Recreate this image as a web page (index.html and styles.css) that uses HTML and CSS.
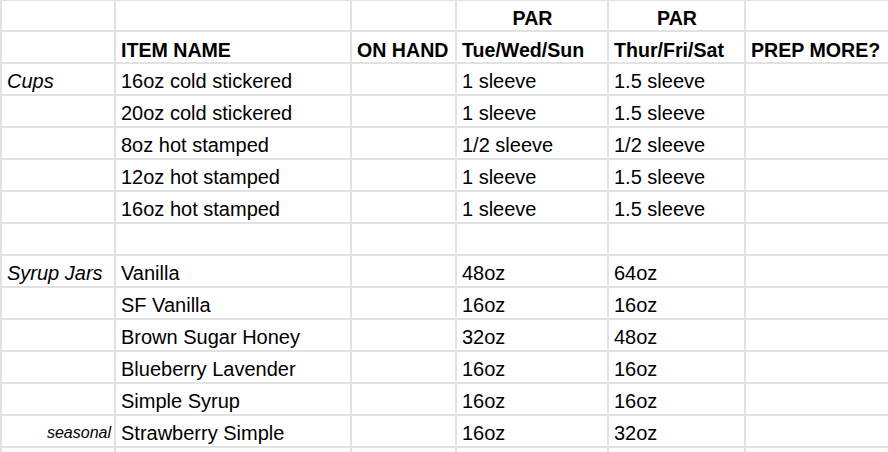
FILE: index.html
```html
<!DOCTYPE html>
<html>
<head>
<meta charset="utf-8">
<link rel="stylesheet" href="styles.css">
</head>
<body>
<div class="sheet">
  <div class="c"></div><div class="c"></div><div class="c"></div><div class="c b ctr">PAR</div><div class="c b ctr">PAR</div><div class="c"></div>
  <div class="c"></div><div class="c b">ITEM NAME</div><div class="c b">ON HAND</div><div class="c b">Tue/Wed/Sun</div><div class="c b">Thur/Fri/Sat</div><div class="c b">PREP MORE?</div>

  <div class="c i">Cups</div><div class="c">16oz cold stickered</div><div class="c"></div><div class="c">1 sleeve</div><div class="c">1.5 sleeve</div><div class="c"></div>
  <div class="c"></div><div class="c">20oz cold stickered</div><div class="c"></div><div class="c">1 sleeve</div><div class="c">1.5 sleeve</div><div class="c"></div>
  <div class="c"></div><div class="c">8oz hot stamped</div><div class="c"></div><div class="c">1/2 sleeve</div><div class="c">1/2 sleeve</div><div class="c"></div>
  <div class="c"></div><div class="c">12oz hot stamped</div><div class="c"></div><div class="c">1 sleeve</div><div class="c">1.5 sleeve</div><div class="c"></div>
  <div class="c"></div><div class="c">16oz hot stamped</div><div class="c"></div><div class="c">1 sleeve</div><div class="c">1.5 sleeve</div><div class="c"></div>

  <div class="c"></div><div class="c"></div><div class="c"></div><div class="c"></div><div class="c"></div><div class="c"></div>

  <div class="c i">Syrup Jars</div><div class="c">Vanilla</div><div class="c"></div><div class="c">48oz</div><div class="c">64oz</div><div class="c"></div>
  <div class="c"></div><div class="c">SF Vanilla</div><div class="c"></div><div class="c">16oz</div><div class="c">16oz</div><div class="c"></div>
  <div class="c"></div><div class="c">Brown Sugar Honey</div><div class="c"></div><div class="c">32oz</div><div class="c">48oz</div><div class="c"></div>
  <div class="c"></div><div class="c">Blueberry Lavender</div><div class="c"></div><div class="c">16oz</div><div class="c">16oz</div><div class="c"></div>
  <div class="c"></div><div class="c">Simple Syrup</div><div class="c"></div><div class="c">16oz</div><div class="c">16oz</div><div class="c"></div>
  <div class="c i small">seasonal</div><div class="c">Strawberry Simple</div><div class="c"></div><div class="c">16oz</div><div class="c">32oz</div><div class="c"></div>

  <div class="c"></div><div class="c"></div><div class="c"></div><div class="c"></div><div class="c"></div><div class="c"></div>
</div>
</body>
</html>
```
FILE: styles.css
```css
html, body {
  margin: 0;
  padding: 0;
  background: #ffffff;
  height: 452px;
  overflow: hidden;
}
.sheet {
  display: grid;
  grid-template-columns: 112px 234px 103px 150px 135px 1fr;
  grid-template-rows: 29px repeat(13, 30px) 4px;
  gap: 2px;
  padding: 1px 0 0 2px;
  background: #e2e2e2;
  width: 888px;
  box-sizing: border-box;
  font-family: "Liberation Sans", Arial, sans-serif;
  font-size: 20px;
  color: #000000;
}
.c {
  background: #ffffff;
  display: flex;
  align-items: flex-end;
  padding: 0 4px 1px 5px;
  white-space: nowrap;
  overflow: hidden;
  line-height: 23px;
}
.b { font-weight: bold; font-size: 19.6px; padding-bottom: 0; }
.i { font-style: italic; }
.ctr { justify-content: center; }
.small {
  font-size: 16px;
  justify-content: flex-end;
  padding-right: 3px;
  padding-bottom: 2px;
}
```
